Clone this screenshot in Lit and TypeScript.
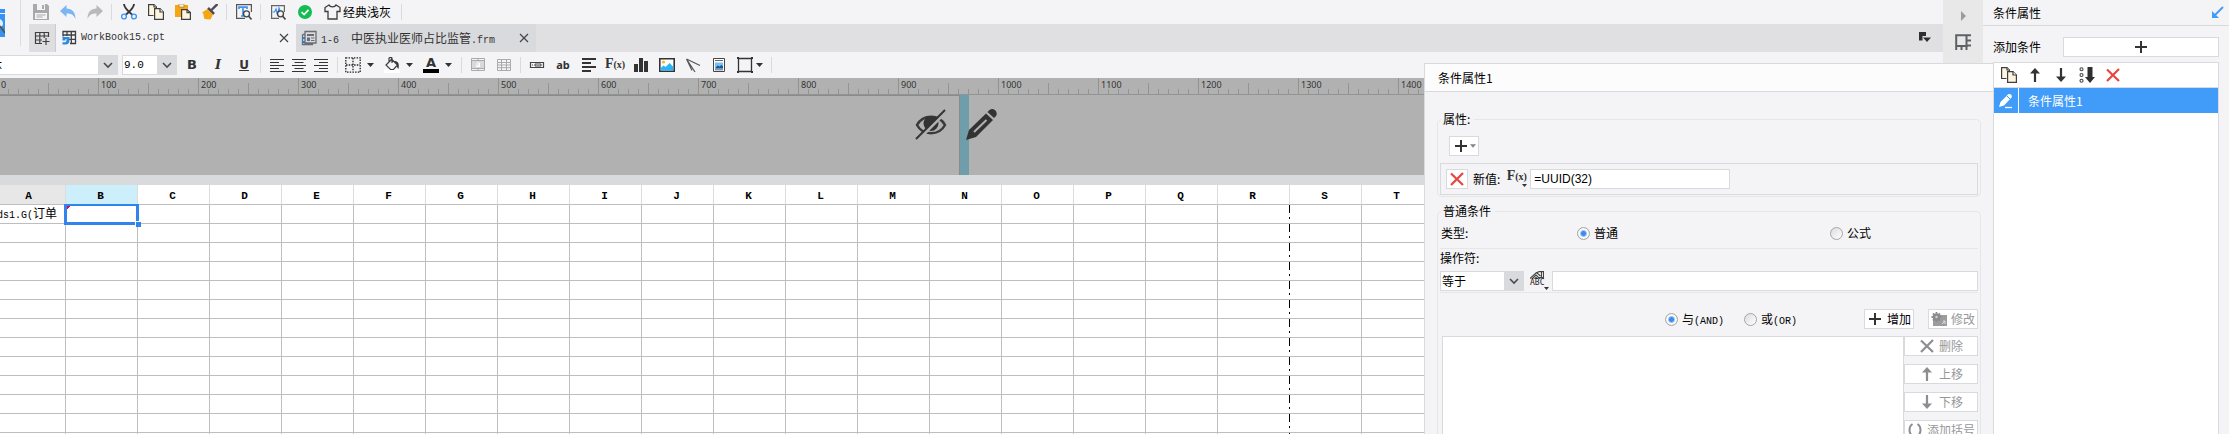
import { LitElement, html, svg, css, nothing } from "lit";
import { customElement, state } from "lit/decorators.js";

const INK = "#333334";

const icon = (body: unknown, w = 16, h = 16) =>
  html`<svg width=${w} height=${h} viewBox="0 0 ${w} ${h}" fill="none" aria-hidden="true">${body}</svg>`;

const pages = svg`
  <g stroke="#3f3f42" stroke-width="1.2" fill="#fdf5df">
    <path d="M5.5 11.5H.6V.6H6L8.4 3v2" /><path d="M6 .6V3h2.4" />
    <path d="M6.6 4.6H12L15.4 8v7.4H6.6z" /><path d="M12 4.6V8h3.4" />
  </g>`;
const cross = (c: string) => svg`<path d="M2 2.5 14 14M14 2 2 14" stroke=${c} stroke-width="2.2" />`;
const plus = svg`<path d="M8 2v12M2 8h12" stroke=${INK} stroke-width="2" />`;
const up = (c: string) => svg`<path d="M8 1 3 6.5h3.9V15h2.2V6.5H13z" fill=${c} />`;
const down = (c: string) => svg`<path d="M8 15 3 9.5h3.9V1h2.2v8.5H13z" fill=${c} />`;
const magnifier = svg`<circle cx="10.5" cy="9.8" r="3" stroke="#444" stroke-width="1.3" fill="#f4f4f6" /><path d="m12.5 12 3 3.4" stroke="#444" stroke-width="1.6" />`;
const grid = (c: string) => svg`<path d="M1.5 2.5h13v11h-13zM1.5 5.5h13M1.5 8h13M1.5 10.7h13M5.5 2.5v11M10.5 2.5v11" stroke=${c} />`;
const chevron = icon(svg`<path d="m4 6 4 4 4-4" stroke="#4b4b4d" stroke-width="1.6" />`);
const caret = html`<svg class="caret" width="7" height="4" viewBox="0 0 7 4" aria-hidden="true"><path d="M0 0h7L3.5 4z" fill="#333334" /></svg>`;
const formula = html`<span class="fx" aria-hidden="true">F<small>(x)</small></span>`;

const icons = {
  save: icon(svg`<path d="M0 0h14l2 2v14H0z" fill="#a9a9ab" /><path d="M4 0h8v6H4z" fill="#f4f4f6" /><path d="M9 1h2v4H9z" fill="#a9a9ab" /><path d="M2 9h12v6H2z" fill="#f4f4f6" /><path d="M3.500 11h9M3.500 13h6" stroke="#a9a9ab" />`),
  undo: icon(svg`<path d="M6.500 1v3.500C12 4.500 15.500 8 15.500 15 13.500 10.500 11 9.500 6.500 9.500V13L0 7z" fill="#7cb5f2" />`),
  redo: icon(svg`<path d="M9.500 1v3.500C4 4.500.5 8 .5 15 2.500 10.500 5 9.500 9.500 9.500V13L16 7z" fill="#b9b9bb" />`),
  cut: icon(svg`<path d="M3 0c0 3 3 6.500 8.500 11M13 0c0 3-3 6.500-8.500 11" stroke="#37373a" stroke-width="1.900" /><circle cx="3" cy="12.500" r="2.400" stroke="#3d94f2" stroke-width="1.400" /><circle cx="13" cy="12.500" r="2.400" stroke="#3d94f2" stroke-width="1.400" />`),
  copy: icon(pages),
  paste: icon(svg`<path d="M0 1h13v12H0z" fill="#f4a712" /><path d="M4 0h5v3H4z" fill="#f4f4f6" stroke="#a86c00" stroke-width=".6" /><path d="M6.600 5.600H12l3.400 3v6.800H6.600z" fill="#fdf5df" stroke="#3f3f42" stroke-width="1.200" /><path d="M12 5.600v3h3.400" stroke="#3f3f42" stroke-width="1.200" />`),
  brush: icon(svg`<path d="m15.500 0-6 6" stroke="#4c4a58" stroke-width="2.400" /><path d="m6 4 6 6" stroke="#4c4a58" stroke-width="2.600" /><path d="M5.500 5 0 8.500c2 .5 1 3 2.500 6.500l6 .5L11 10.500z" fill="#f4a712" />`),
  textPreview: icon(svg`<path d="M15.400 8V.6H.6v13.800H9" stroke="#555" stroke-width="1.200" /><path d="M3 5V3.200h8V5M7 3.200V12M5 12h4" stroke="#3d94f2" stroke-width="1.700" />${magnifier}`),
  chartPreview: icon(svg`<path d="M14.400 8V1.600H1.600v12.800H9" stroke="#666" stroke-width="1.200" /><path d="M2.500 8h2L6 5l1.500 6L9 4l1.500 4H13" stroke="#3d94f2" stroke-width="1.200" />${magnifier}`),
  check: icon(svg`<circle cx="8" cy="8" r="7" fill="#14bd52" /><path d="m4.600 8.200 2.500 2.400 4.400-4.700" stroke="#fff" stroke-width="1.700" />`),
  shirt: icon(svg`<path d="M5 1 1 3.500v4h3V15h9V7.500h3v-4L12 1c-1 2.400-6 2.400-7 0z" stroke="#3c3c3e" stroke-width="1.300" />`, 17, 16),
  newSheet: icon(svg`<path d="M14.500 7V2.500h-13v11H8M1.500 6h13M1.500 10H8M5.800 2.500v11M10.200 2.500V8M12 8v7M8.500 11.500h7" stroke="#3f3f42" stroke-width="1.200" />`),
  workbook: icon(svg`<path d="M2 6.500v-5h12.500v12H9M2 5h12.500M6 1.500V6M10.300 1.500v12M8 9.300h6.500" stroke="#3f3f42" stroke-width="1.300" /><path d="M1.500 7h3v3.500h-3zM4.500 7h4v3c0 3-1.500 4.500-4 4.500H1.500v-2.200h2c1.500 0 2-.8 2-2.300v-1h-1z" fill="#2a8ae0" />`),
  form: icon(svg`<path d="M1.500 4.500v10h10V13M1.500 4.500H4M4 4.500V1.500h11V13H4z" stroke="#6a6d73" stroke-width="1.300" /><path d="M6 4h7v2H6zM6 7.500h3V11H6z" fill="#6a6d73" /><path d="M10 8h3.500M10 10.500h3.500" stroke="#6a6d73" /><path d="M1 7h3v2H1zM1 11h3v2H1z" fill="#2f7fc4" />`),
  left: icon(svg`<path d="M1 3.500h14M1 6.500h9M1 9.500h14M1 12.500h9M1 15.500h14" stroke=${INK} />`, 16, 18),
  center: icon(svg`<path d="M1 3.500h14M3.500 6.500h9M1 9.500h14M3.500 12.500h9M1 15.500h14" stroke=${INK} />`, 16, 18),
  right: icon(svg`<path d="M1 3.500h14M6 6.500h9M1 9.500h14M6 12.500h9M1 15.500h14" stroke=${INK} />`, 16, 18),
  border: icon(svg`<path d="M.8.8h14.400v14.400H.8zM8 1v14M1 8h14" stroke="#222" stroke-width="1.300" stroke-dasharray="1.500 1.200" />`),
  bucket: icon(svg`<path d="M0 12h16v4H0z" fill="#fff" /><path d="m7 3-5 5 4.500 4.500h3l4-4.500L7.500 2zM5 5V1.500C5 0 8 0 8 1.500V6" stroke="#3c3c3e" stroke-width="1.200" /><path d="M10 4c4 0 5.500 2 4.500 8-1.500-1-2-3-1-4z" fill="#333" />`),
  merge: icon(svg`<path d="M1.500 1.500h13v12h-13zM1.500 3.500h13M1.500 11.500h13M8 1.500v2M8 11.500v2" stroke="#a9a9ac" /><path d="M2 4h12v7H2z" fill="#d9d9dc" /><path d="M6.500 6h3v3.500h-3V8h3" stroke="#fff" />`),
  grid: icon(grid("#a9a9ac")),
  widget: icon(svg`<path d="M1.500 5.500h13v5h-13z" stroke="#444" stroke-width="1.200" /><path d="M6 7h6v2H6z" stroke="#444" /><path d="M3 7.500h1v1H3z" fill="#444" />`),
  para: icon(svg`<path d="M1 2h14M1 6h9M1 10h14M1 14h9" stroke=${INK} stroke-width="1.800" />`),
  bars: icon(svg`<path d="M1 7h4v8H1zM6 1h4v14H6zM11 4h4v11h-4z" fill=${INK} />`),
  image: icon(svg`<path d="M.8 1.800h14.400v12.400H.8z" fill="#fff" stroke="#333" stroke-width="1.600" /><circle cx="4.500" cy="5" r="1.600" fill="#f7b53d" /><path d="m1.600 11 3-2.500 2 1.500 4-4 3.800 4v3.400H1.600z" fill="#2db4f5" />`),
  lines: icon(svg`<path d="M1.500 2 15 8.500M1.500 2 7 13.500M1.500 2 10 15" stroke="#555" stroke-width="1.200" />`),
  report: icon(svg`<path d="M2.500 1.500h11v13h-11z" fill="#fff" stroke="#444" /><path d="M4 3.500h8M4 12.800h8" stroke="#666" /><path d="M4 5.500h8v6H4z" fill="#79bff0" /><path d="m4 11.500 2.500-3 2 1 2-1.500 1.500 1.500v2z" fill="#0c5aa4" />`),
  rect: icon(svg`<path d="M1.500 1.500h13v13h-13z" stroke="#333" stroke-width="1.300" /><path d="M0 0h2v2H0zM14 0h2v2h-2zM0 14h2v2H0zM14 14h2v2h-2z" fill="#333" />`),
  tabMenu: icon(svg`<path d="M1 2h7v4H4.500v4.500H1z" fill="#2f2f31" /><path d="M5 7.500h8L9 12z" fill="#2f2f31" />`),
  expand: icon(svg`<path d="m6 3 5 5-5 5z" fill="#9b9b9e" />`),
  cells: icon(svg`<path d="M1.200 16V1.200H16M1.200 12h11.500M11.500 1.200V16M6.500 12v4M12 6.500h4M12 11.500h4" stroke="#5d6067" stroke-width="2" />`),
  shrink: icon(svg`<path d="M14 2 5 11" stroke="#419bf9" stroke-width="1.800" /><path d="M3 6v7h7z" fill="#419bf9" />`),
  sort: icon(svg`<g stroke="#444" stroke-width="1.100"><circle cx="2.500" cy="2.200" r="1.500" /><circle cx="2.500" cy="8" r="1.500" /><circle cx="2.500" cy="13.800" r="1.500" /></g><path d="M8.500 0h5v10H16l-5 6-5-6h2.500z" fill="#2f2f31" />`),
  edit: icon(svg`<path d="m1 14 1.500-5 7.500-7.500C12 0 15 2.500 13.500 4.500L6 12.500z" fill="#fff" /><path d="m9 3 3.500 3.500" stroke="#419bf9" /><path d="M7 14.500h7" stroke="#fff" stroke-width="1.300" />`),
  gear: icon(svg`<path d="M2 4h14v11H2z" fill="#9c9c9e" /><circle cx="5.500" cy="6" r="3.500" fill="#8b8b8e" /><path d="M5.500 1v10M.5 6h10M2 2.500l7 7M9 2.500l-7 7" stroke="#8b8b8e" stroke-width="1.800" /><circle cx="5.500" cy="6" r="1.200" fill="#d2d2d4" /><path d="m11 13 3-3M12 10h2v3" stroke="#ddd" />`),
  brackets: icon(svg`<path d="M5.500 2c-4 2.500-4 9.500 0 12M10.500 2c4 2.500 4 9.500 0 12" stroke="#8e8e91" stroke-width="2" />`),
  abc: icon(svg`<path d="M9 .6h4.500v6H9M9 .6 6.500 2M11.500 1v5.500M0 7.500l6.500-6 4 3.500M2 8l4-4 4 4M4.500 8 6 6.500 7.500 8" stroke="#444" stroke-width="1.100" />`, 14, 8),
  eyeOff: icon(svg`<path d="M2 16c6-11 22-11 28 0-6 11-22 11-28 0z" stroke="#3a3a3b" stroke-width="2.500" /><circle cx="16" cy="14.500" r="7.500" fill="#333" /><path d="M3 31 32 2" stroke="#b1b1b1" stroke-width="3" /><path d="M1 30 30 1" stroke="#333" stroke-width="2" />`, 32, 32),
  pencil: icon(svg`<path d="M0 31 3 21 20 4.500 27 11 10 28z" fill="#333" /><path d="M8 23 20.500 11" stroke="#b1b1b1" stroke-width="2" /><path d="m21.500 3 2-2c4-3 9 2 6.500 6l-2 2z" fill="#333" />`, 32, 32),
};

const COLUMNS = "ABCDEFGHIJKLMNOPQRST".split("");
const ROWS = Array.from({ length: 13 }, (_, i) => i + 1);
const MARKS = Array.from({ length: 15 }, (_, i) => i * 100);

const tool = (label: string, content: unknown, cls = "") =>
  html`<button class="tool ${cls}" aria-label=${label}>${content}</button>`;
const split = (label: string, content: unknown, cls = "") =>
  html`<button class="split ${cls}" aria-label=${label}>${content}${caret}</button>`;
const bar = html`<span class="bar"></span>`;

const shared = css`
  * { box-sizing: border-box; }
  button, input, select { font: inherit; color: inherit; margin: 0; padding: 0; border-radius: 0; }
  button { border: 0; background: none; display: flex; align-items: center; justify-content: center; }
  svg { display: block; flex: none; }
  .mono { font-family: "Liberation Mono", "Noto Sans CJK SC", monospace; font-size: 10px; line-height: 10px; }
  .field { height: 20px; border: 1px solid #d9dadd; background: #fff; }
  .combo { display: grid; height: 20px; }
  .combo select { grid-area: 1 / 1; appearance: none; height: 20px; border: 1px solid #d9dadd; border-right: 0;
    padding: 0 20px 0 1px; width: 100%; background: linear-gradient(to left, #d9dadd 20px, #fff 20px); }
  .combo svg { grid-area: 1 / 1; justify-self: end; align-self: center; margin-right: 2px; pointer-events: none; }
  .fx { font: bold 14px/16px "Liberation Serif", serif; color: #333; display: inline-flex; align-items: baseline; }
  .fx small { font-size: 10px; }
`;

@customElement("main-toolbar")
export class MainToolbar extends LitElement {
  static styles = [shared, css`
    :host { display: flex; height: 52px; overflow: hidden; }
    .big { width: 21px; height: 46px; border-right: 1px solid #dcdde0; justify-content: flex-start; flex: none; margin-right: 6px; }
    .stack { flex: 1; min-width: 0; }
    .quick { display: flex; height: 24px; align-items: center; }
    .tool { width: 27px; height: 24px; }
    .bar { width: 1px; height: 16px; background: #d9dadd; margin: 0 3px; }
    .theme { gap: 2px; padding: 0 7px 0 6px; }
    .tabs { display: flex; height: 28px; margin-left: 2px; background: #e0e0e2; }
    .new { width: 27px; background: #dedee0; border-right: 1px solid #cbccd0; }
    .tab { display: flex; align-items: center; width: 240px; padding: 0 5px; gap: 4px; background: #d9dadd; color: #333; white-space: pre; }
    .tab.active { background: #f4f4f6; }
    .name { flex: 1; }
    .close { width: 14px; height: 20px; }
    .more { margin-left: auto; margin-right: 9px; width: 16px; }
  `];
  render() {
    const close = icon(svg`<path d="m1 1 8 8M9 1 1 9" stroke="#444" stroke-width="1.2" />`, 10, 10);
    return html`
      <button class="big" aria-label="预览">${icon(svg`
        <path d="M0 0h5v4H0zM0 5h5v23H0z" fill="#3692f5" /><path d="M0 10c4 2 4 7 0 9" fill="#e6f0fb" /><path d="m0 17 5 7" stroke="#555" stroke-width="2" />`, 5, 28)}</button>
      <div class="stack">
        <div class="quick" role="toolbar" aria-label="常用">
          ${tool("保存", icons.save)}${tool("撤销", icons.undo)}${tool("恢复", icons.redo)}${bar}
          ${tool("剪切", icons.cut)}${tool("复制", icons.copy)}${tool("粘贴", icons.paste)}${tool("格式刷", icons.brush)}${bar}
          ${tool("查找", icons.textPreview)}${bar}
          ${tool("分析", icons.chartPreview)}${tool("校验", icons.check)}
          <button class="theme">${icons.shirt}经典浅灰</button>${bar}
        </div>
        <div class="tabs">
          <button class="new" aria-label="新建">${icons.newSheet}</button>
          <div class="tab active">${icons.workbook}<span class="name mono">WorkBook15.cpt</span><button class="close" aria-label="关闭">${close}</button></div>
          <div class="tab">${icons.form}<span class="name"><span class="mono">1-6  </span>中医执业医师占比监管<span class="mono">.frm</span></span><button class="close" aria-label="关闭">${close}</button></div>
          <button class="more" aria-label="全部标签">${icons.tabMenu}</button>
        </div>
      </div>`;
  }
}

@customElement("format-toolbar")
export class FormatToolbar extends LitElement {
  static styles = [shared, css`
    :host { display: flex; align-items: center; height: 26px; overflow: hidden; padding-bottom: 1px; }
    .font { width: 142px; margin-left: -24px; margin-right: 4px; flex: none; }
    .size { width: 55px; margin-right: 2px; flex: none; }
    .size select { font-family: "Liberation Mono", monospace; font-size: 11px; }
    .tool { width: 26px; height: 24px; flex: none; color: #333; }
    .aligns { display: flex; padding: 0 2px; }
    .aligns .tool { width: 22px; }
    .split { width: 39px; height: 24px; padding: 0 6px 0 4px; gap: 6px; flex: none; }
    .split.shape { width: 36px; padding: 0 5px; gap: 3px; }
    .bar { width: 1px; height: 16px; background: #d9dadd; margin: 0 3px; flex: none; }
    .b { font: bold 13px "DejaVu Sans", sans-serif; }
    .i { font: italic bold 13px "DejaVu Serif", serif; }
    .u { font: bold 12px "DejaVu Sans", sans-serif; text-decoration: underline; }
    .ab { font: bold 11px "Noto Sans", sans-serif; }
    .ink { font: bold 13px/11px "DejaVu Sans", sans-serif; width: 16px; border-bottom: 4px solid #000; color: #333; padding-bottom: 1px; }
  `];
  render() {
    return html`
      <div class="combo font"><select aria-label="字体"><option>宋体</option></select>${chevron}</div>
      <div class="combo size"><select aria-label="字号"><option>9.0</option></select>${chevron}</div>
      ${tool("加粗", "B", "b")}${tool("斜体", "I", "i")}${tool("下划线", "U", "u")}${bar}
      <div class="aligns">${tool("左对齐", icons.left)}${tool("居中", icons.center)}${tool("右对齐", icons.right)}</div>${bar}
      ${split("边框", icons.border)}${split("填充", icons.bucket)}${split("文字颜色", html`<span class="ink">A</span>`)}${bar}
      ${tool("合并", icons.merge)}${tool("取消合并", icons.grid)}${bar}
      ${tool("控件", icons.widget)}${tool("文本", "ab", "ab")}${tool("富文本", icons.para)}${tool("公式", formula)}
      ${tool("图表", icons.bars)}${tool("图片", icons.image)}${tool("斜线", icons.lines)}${tool("子报表", icons.report)}
      ${split("悬浮元素", icons.rect, "shape")}${bar}`;
  }
}

@customElement("sheet-canvas")
export class SheetCanvas extends LitElement {
  static styles = [shared, css`
    :host { display: block; flex: 1; min-height: 0; overflow: hidden; background: #fff; }
    .ruler { display: flex; height: 17px; background: #b1b1b1; border-bottom: 1px solid #939393; overflow: hidden; }
    .marks { display: flex; margin-left: -2px; }
    .mark { width: 100px; flex: none; padding-left: 3px; font: 9px/14px "Noto Sans", sans-serif; color: #333;
      background:
        linear-gradient(#939393, #939393) 0 0 / 1px 100% no-repeat,
        linear-gradient(#939393, #939393) 50px 100% / 1px 11px no-repeat,
        repeating-linear-gradient(to right, #939393 0 1px, transparent 1px 10px) 0 100% / 100% 5px no-repeat; }
    .form { display: flex; height: 80px; background: #b1b1b1; }
    .body { display: flex; justify-content: flex-end; width: 960px; border: solid #8b8b8b; border-width: 1px 1px 0 0; padding: 13px 12px 0 0; }
    .edge { width: 9px; background: #6f9eaa; }
    .pen { margin: 14px 0 0 -3px; position: relative; }
    .gap { height: 10px; background: #d9dadc; }
    table { table-layout: fixed; border-collapse: separate; border-spacing: 0; width: 1440px; margin-left: -6px; }
    th, td { width: 72px; padding: 0; border-right: 1px solid #bebebe; border-bottom: 1px solid #bebebe; overflow: hidden; white-space: nowrap; }
    th { height: 20px; border-right-color: #dcdcdd; font: bold 11px "Liberation Mono", monospace; padding: 3px 2px 0 0; line-height: 14px; }
    th.used { background: #e7e7e7; }
    th.current { background: #cdeffb; }
    td { height: 19px; padding: 0 0 2px 3px; line-height: 14px; }
    td.page { border-right: 0; background: repeating-linear-gradient(#000 0 8px, #fff 8px 12px, #000 12px 14px, #fff 14px 18px) right 0 / 1px 100% no-repeat; }
    td.current { position: relative; overflow: visible; }
    .selection { position: absolute; inset: -1px -2px -2px -2px; border: 3px solid #3183ee; border-top-width: 2px; }
    .flag { position: absolute; left: 1px; top: 1px; width: 4px; height: 4px; background: linear-gradient(135deg, #f5003c 50%, transparent 50%); }
    .handle { position: absolute; right: -4px; bottom: -4px; width: 6px; height: 6px; background: #3183ee; border: solid #fff; border-width: 1px 0 0 1px; }
  `];
  private cell(row: number, col: string) {
    if (row === 1 && col === "A") return html`<td><span class="mono">ds1.G(</span>订单</td>`;
    if (row === 1 && col === "B") return html`<td class="current"><div class="selection"></div><div class="flag"></div><div class="handle"></div></td>`;
    return html`<td class=${col === "R" ? "page" : nothing}></td>`;
  }
  render() {
    return html`
      <div class="ruler"><div class="marks">${MARKS.map((m) => html`<span class="mark">${m}</span>`)}</div></div>
      <div class="form">
        <div class="body">${icons.eyeOff}</div><div class="edge"></div><div class="pen">${icons.pencil}</div>
      </div>
      <div class="gap"></div>
      <table>
        <thead><tr>${COLUMNS.map((c) => html`<th scope="col" class=${c === "A" ? "used" : c === "B" ? "current" : nothing}>${c}</th>`)}</tr></thead>
        <tbody>${ROWS.map((r) => html`<tr>${COLUMNS.map((c) => this.cell(r, c))}</tr>`)}</tbody>
      </table>`;
  }
}

@customElement("condition-editor")
export class ConditionEditor extends LitElement {
  @state() private kind = "普通";
  @state() private join = "AND";
  static styles = [shared, css`
    :host { display: flex; flex-direction: column; background: #f4f4f6; border: solid #d9dadd; border-width: 1px 0 0 1px; overflow: hidden; }
    h2 { margin: 0; height: 28px; flex: none; padding-left: 13px; font-size: 12px; font-weight: 400; line-height: 27px; background: #fcfcfd; border-bottom: 1px solid #d9dadd; }
    fieldset { border: 1px solid #e6e6e9; border-radius: 5px; margin: 0 12px 0 12px; padding: 0 2px; min-width: 0; }
    legend { padding: 0 4px 0 2px; margin-left: 1px; line-height: 16px; }
    .props { margin-top: 19px; height: 86px; flex: none; }
    .plain { margin-top: 6px; flex: none; border-bottom: 0; }
    .add { width: 30px; height: 20px; margin: 9px 0 7px 9px; border: 1px solid #d9dadd; background: #fff; gap: 1px; }
    .add .caret { opacity: .6; width: 6px; }
    .value { display: flex; align-items: center; height: 32px; border: 1px solid #d9dadd; padding-left: 5px; }
    .remove { width: 22px; height: 20px; border: 1px solid #d9dadd; background: #fff; margin-right: 5px; }
    .pick { width: 24px; height: 20px; margin-left: 6px; padding-right: 3px; display: grid; justify-items: start; align-content: start; overflow: visible; }
    .pick .fx { line-height: 14px; }
    .pick .caret { justify-self: end; width: 5px; height: 3px; }
    .value .field { width: 200px; font-family: "Liberation Sans", sans-serif; padding: 0 3px; }
    .row { display: flex; align-items: center; }
    .type { height: 30px; padding-bottom: 1px; border-bottom: 1px solid #e6e6e9; padding-left: 1px; }
    .type label { flex: 0 0 253px; }
    .type .label { flex: 0 0 136px; }
    .radio { display: flex; align-items: center; gap: 4px; }
    .radio input { appearance: none; width: 13px; height: 13px; border: 1px solid #a6a6a8; border-radius: 50%; background: linear-gradient(135deg, #dcdcdc, #fff); }
    .radio input:checked { background: radial-gradient(#3d8bf0 0 2px, #fff 4px, #e9e9eb 6px); }
    .caption { display: block; height: 22px; line-height: 18px; }
    .op { height: 21px; padding-bottom: 1px; }
    .op .combo { width: 84px; }
    .op .field { flex: 1; min-width: 0; padding: 0 3px; }
    .abc { width: 28px; height: 20px; flex-direction: column; justify-content: flex-start; align-items: flex-start; padding-left: 6px; }
    .abc span { font: 8px/8px "DejaVu Sans Mono", monospace; color: #222; }
    .abc .caret { width: 5px; height: 3px; align-self: flex-end; margin-right: 3px; }
    .logic { border-top: 1px solid #e6e6e9; padding-top: 16px; height: 44px; align-items: flex-start; }
    .logic .radio { height: 20px; }
    .logic .spread { flex: 1; }
    .pair { display: flex; gap: 20px; margin-right: 67px; }
    .button { height: 20px; border: 1px solid #d9dadd; background: #fff; gap: 4px; white-space: nowrap; line-height: 18px; }
    .button:disabled { color: #97979a; }
    .logic .button { width: 50px; margin-left: 14px; }
    .logic .first { margin-left: 0; }
    .work { display: flex; padding-left: 2px; }
    .list { flex: 1; background: #fff; border: 1px solid #d9dadd; height: 120px; }
    .side { width: 74px; display: flex; flex-direction: column; gap: 8px; }
    .side .button { width: 74px; }
  `];
  private radio(name: "kind" | "join", value: string, text: unknown) {
    return html`<label class="radio"><input type="radio" name=${name} .checked=${this[name] === value} @change=${() => (this[name] = value)} /><span>${text}</span></label>`;
  }
  render() {
    return html`
      <h2>条件属性1</h2>
      <fieldset class="props">
        <legend>属性:</legend>
        <button class="add" aria-label="添加属性">${icon(plus)}${caret}</button>
        <div class="value">
          <button class="remove" aria-label="删除属性">${icon(cross("#e8463c"))}</button>
          <label for="value">新值:</label>
          <button class="pick" aria-label="值类型">${formula}${caret}</button>
          <input id="value" class="field" .value=${"=UUID(32)"} />
        </div>
      </fieldset>
      <fieldset class="plain">
        <legend>普通条件</legend>
        <div class="row type"><span class="label">类型:</span>${this.radio("kind", "普通", "普通")}${this.radio("kind", "公式", "公式")}</div>
        <label class="caption" for="op">操作符:</label>
        <div class="row op">
          <div class="combo"><select id="op"><option>等于</option></select>${chevron}</div>
          <button class="abc" aria-label="类型">${icons.abc}<span>ABC</span>${caret}</button>
          <input class="field" aria-label="比较值" />
        </div>
        <div class="row logic">
          <span class="spread"></span>
          <div class="pair">${this.radio("join", "AND", html`与<span class="mono">(AND)</span>`)}${this.radio("join", "OR", html`或<span class="mono">(OR)</span>`)}</div>
          <button class="button first">${icon(plus)}增加</button>
          <button class="button" disabled>${icons.gear}修改</button>
        </div>
        <div class="work">
          <div class="list" role="listbox" aria-label="条件列表"></div>
          <div class="side">
            <button class="button" disabled>${icon(cross("#8e8e91"))}删除</button>
            <button class="button" disabled>${icon(up("#8e8e91"))}上移</button>
            <button class="button" disabled>${icon(down("#8e8e91"))}下移</button>
            <button class="button" disabled>${icons.brackets}添加括号</button>
          </div>
        </div>
      </fieldset>`;
  }
}

@customElement("condition-list")
export class ConditionList extends LitElement {
  static styles = [shared, css`
    :host { display: flex; flex-direction: column; background: #f4f4f6; }
    header { display: flex; align-items: center; justify-content: space-between; height: 26px; flex: none; padding: 0 4px 0 10px; border-bottom: 1px solid #d9dadd; }
    h2 { margin: 0; font-size: 12px; font-weight: 400; line-height: 24px; }
    .add { display: flex; align-items: center; justify-content: space-between; height: 36px; padding: 5px 10px 0 10px; flex: none; }
    .add button { width: 156px; height: 20px; border: 1px solid #d9dadd; background: #fff; }
    .box { flex: 1; margin: 0 10px; border: 1px solid #d9dadd; border-bottom: 0; background: #fff; }
    .tools { display: flex; height: 25px; border-bottom: 1px solid #d9dadd; padding-left: 2px; }
    .tools .tool { width: 26px; height: 24px; }
    .item { display: flex; height: 25px; width: 100%; background: #419bf9; color: #fff; justify-content: flex-start; }
    .pen { width: 25px; height: 25px; display: grid; place-items: center; border-right: 1px solid #fff; margin-right: 9px; }
  `];
  render() {
    return html`
      <header><h2>条件属性</h2><button aria-label="收起">${icons.shrink}</button></header>
      <div class="add"><label for="add">添加条件</label><button id="add" aria-label="添加条件">${icon(plus)}</button></div>
      <div class="box">
        <div class="tools">
          ${tool("复制", icons.copy)}${tool("上移", icon(up(INK)))}${tool("下移", icon(down(INK)))}${tool("排序", icons.sort)}${tool("删除", icon(cross("#e8463c")))}
        </div>
        <button class="item"><span class="pen">${icons.edit}</span>条件属性1</button>
      </div>`;
  }
}

@customElement("app-root")
export class AppRoot extends LitElement {
  static styles = [shared, css`
    :host { display: grid; grid-template-columns: minmax(0, 1fr) 40px 246px; height: 100vh; overflow: hidden; position: relative;
      font: 12px/16px "Noto Sans CJK SC", sans-serif; color: #000; background: #f4f4f6; }
    main { display: flex; flex-direction: column; min-height: 0; min-width: 0; }
    .rail { background: #e8e8e8; display: flex; flex-direction: column; align-items: center; gap: 10px; padding-top: 8px; }
    condition-editor { position: absolute; right: 236px; top: 63px; bottom: 0; width: 569px; }
    condition-list { min-height: 0; position: relative; }
  `];
  render() {
    return html`
      <main><main-toolbar></main-toolbar><format-toolbar></format-toolbar><sheet-canvas></sheet-canvas></main>
      <nav class="rail" aria-label="面板"><button aria-label="展开">${icons.expand}</button><button aria-label="单元格属性">${icons.cells}</button></nav>
      <condition-list></condition-list>
      <condition-editor></condition-editor>`;
  }
}
